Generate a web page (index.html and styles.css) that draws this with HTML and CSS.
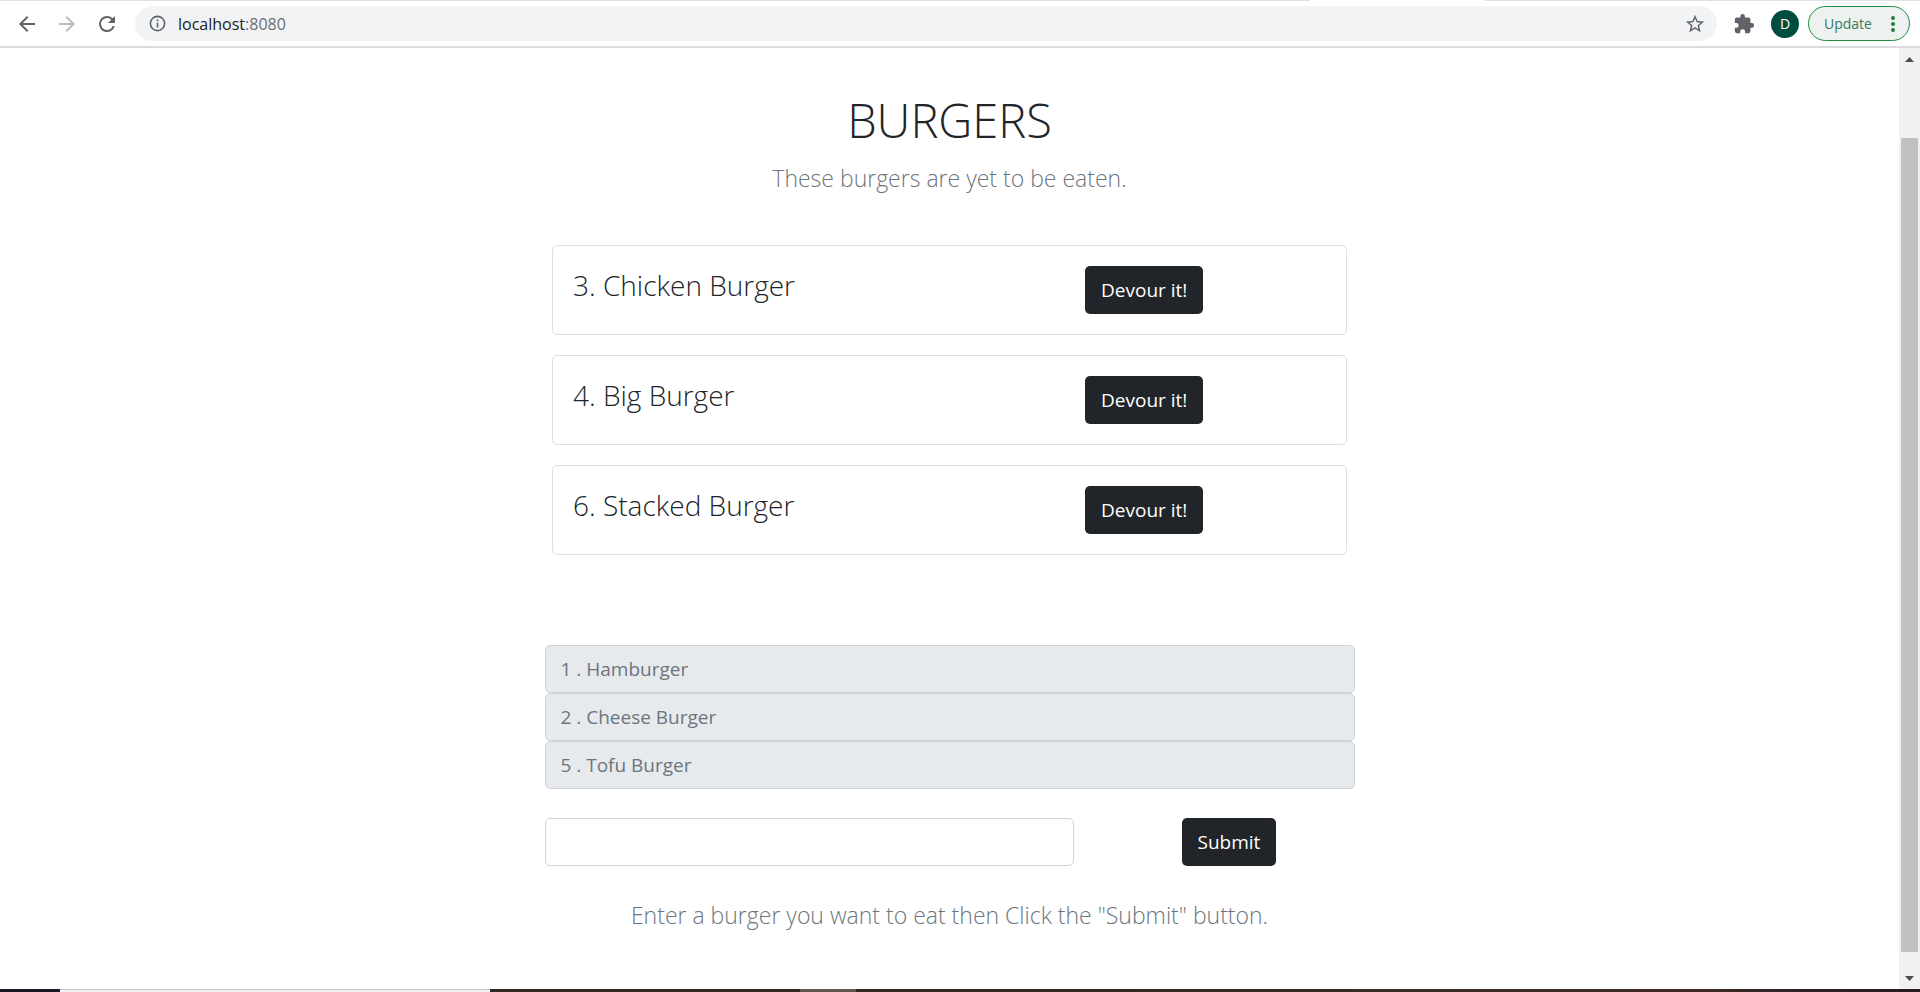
FILE: index.html
```html
<!DOCTYPE html>
<html lang="en">
<head>
<meta charset="utf-8">
<title>Burgers</title>
<link rel="stylesheet" href="styles.css">
</head>
<body>
<div class="window">
  <header class="toolbar">
    <span class="active-tab"></span>
    <nav class="nav">
      <button class="icon-btn" type="button" aria-label="Back"><svg viewBox="0 0 24 24"><path d="M20 11H7.83l5.59-5.59L12 4l-8 8 8 8 1.41-1.41L7.83 13H20z"/></svg></button>
      <button class="icon-btn muted" type="button" aria-label="Forward"><svg viewBox="0 0 24 24"><path d="M12 4l-1.41 1.41L16.17 11H4v2h12.17l-5.58 5.59L12 20l8-8z"/></svg></button>
      <button class="icon-btn" type="button" aria-label="Reload"><svg viewBox="0 0 24 24"><path d="M17.65 6.35A7.96 7.96 0 0 0 12 4a8 8 0 1 0 7.73 10h-2.08A6 6 0 1 1 12 6c1.66 0 3.14.69 4.22 1.78L13 11h7V4z"/></svg></button>
    </nav>
    <div class="omnibox">
      <svg class="info" viewBox="0 0 24 24"><path d="M11 7h2v2h-2zm0 4h2v6h-2zm1-9a10 10 0 1 0 0 20 10 10 0 0 0 0-20zm0 18a8 8 0 1 1 0-16 8 8 0 0 1 0 16z"/></svg>
      <a class="url" href="#">localhost<span class="port">:8080</span></a>
      <button class="icon-btn small" type="button" aria-label="Bookmark"><svg viewBox="0 0 24 24"><path d="M22 9.24l-7.19-.62L12 2 9.19 8.63 2 9.24l5.46 4.73L5.82 21 12 17.27 18.18 21l-1.63-7.03zM12 15.4l-3.76 2.27 1-4.28-3.32-2.88 4.38-.38L12 6.1l1.71 4.04 4.38.38-3.32 2.88 1 4.28z"/></svg></button>
    </div>
    <button class="icon-btn small" type="button" aria-label="Extensions"><svg viewBox="0 0 24 24"><path d="M20.5 11H19V7a2 2 0 0 0-2-2h-4V3.500a2.500 2.500 0 0 0-5 0V5H4a2 2 0 0 0-2 2v3.800h1.500a2.700 2.700 0 0 1 0 5.400H2V20a2 2 0 0 0 2 2h3.800v-1.500a2.700 2.700 0 0 1 5.400 0V22H17a2 2 0 0 0 2-2v-4h1.500a2.500 2.500 0 0 0 0-5z"/></svg></button>
    <button class="avatar" type="button">D</button>
    <button class="update" type="button">Update
      <svg class="dots" viewBox="0 0 4 18"><circle cx="2" cy="3" r="2"/><circle cx="2" cy="9" r="2"/><circle cx="2" cy="15" r="2"/></svg>
    </button>
  </header>

  <div class="viewport">
    <main class="page">
      <h1 class="title">BURGERS</h1>
      <p class="lead">These burgers are yet to be eaten.</p>

      <ul class="cards">
        <li class="card"><h2 class="card-name">3. Chicken Burger</h2><button class="btn" type="button">Devour it!</button></li>
        <li class="card"><h2 class="card-name">4. Big Burger</h2><button class="btn" type="button">Devour it!</button></li>
        <li class="card"><h2 class="card-name">6. Stacked Burger</h2><button class="btn" type="button">Devour it!</button></li>
      </ul>

      <div class="eaten">
        <input class="field" type="text" aria-label="Eaten burger 1" value="1 . Hamburger" disabled>
        <input class="field" type="text" aria-label="Eaten burger 2" value="2 . Cheese Burger" disabled>
        <input class="field" type="text" aria-label="Eaten burger 5" value="5 . Tofu Burger" disabled>
      </div>

      <form class="entry">
        <input class="field" id="burger" type="text">
        <button class="btn" type="submit">Submit</button>
      </form>
      <label class="lead" for="burger">Enter a burger you want to eat then Click the "Submit" button.</label>
    </main>
    <aside class="scrollbar">
      <button class="scroll-btn" type="button" aria-label="Scroll up"><svg viewBox="0 0 9 5"><path d="M0 5L4.500 0L9 5z"/></svg></button>
      <div class="track"><div class="thumb"></div></div>
      <button class="scroll-btn" type="button" aria-label="Scroll down"><svg viewBox="0 0 9 5"><path d="M0 0L4.500 5L9 0z"/></svg></button>
    </aside>
  </div>
  <footer class="taskbar"><span class="task-start"></span><span class="task-search"></span><span class="task-gap"></span><span class="task-active"></span><span class="task-rest"></span></footer>
</div>
</body>
</html>
```
FILE: styles.css
```css
* { box-sizing: border-box; }
body {
  margin: 0;
  background: #fff;
  color: #212529;
  font-family: "Open Sans", "Noto Sans", sans-serif;
  font-size: 19px;
}
button, input { font: inherit; }
button { padding: 0; border: 0; background: none; }
svg { display: block; fill: currentColor; }

.window { display: flex; flex-direction: column; min-height: 100vh; }

.toolbar {
  position: relative;
  display: flex;
  align-items: center;
  height: 48px;
  padding: 0 10px 0 15px;
  border-top: 1px solid #dee1e6;
  border-bottom: 2px solid #dadbde;
  color: #5f6368;
  gap: 16px;
}
.active-tab {
  position: absolute;
  top: -1px;
  left: 1310px;
  width: 175px;
  height: 1px;
  background: #fff;
}
.nav { display: flex; gap: 16px; }
.icon-btn { width: 24px; height: 24px; color: #5f6368; }
.icon-btn.small { width: 22px; height: 22px; }
.icon-btn.muted { color: #babcbe; }
.omnibox {
  flex: 1;
  display: flex;
  align-items: center;
  height: 35px;
  padding: 0 11px 0 13px;
  border-radius: 18px;
  background: #f1f3f4;
}
.info { width: 19px; height: 19px; }
.url {
  flex: 1;
  margin-left: 11px;
  color: #202124;
  font-size: 16px;
  line-height: 24px;
  text-decoration: none;
}
.port { color: #6b6f74; }
.avatar {
  width: 28px;
  height: 28px;
  border-radius: 50%;
  background: #004d40;
  color: #fff;
  font-size: 14px;
}
.update {
  display: flex;
  align-items: center;
  justify-content: space-between;
  width: 102px;
  height: 35px;
  margin-left: -7px;
  padding: 0 14px 0 15px;
  border: 1px solid #1e8e3e;
  border-radius: 18px;
  background: #edf2f0;
  color: #3a7a5c;
  font-size: 14px;
}
.dots { width: 4px; height: 18px; fill: #188038; }

.viewport { flex: 1; display: flex; }
.page {
  flex: 1;
  display: flex;
  flex-direction: column;
  align-items: center;
  padding: 42px 20px 0;
}
.title { margin: 0 0 10px; font-size: 47px; font-weight: 300; line-height: 60px; }
.lead { margin: 0; color: #6c757d; font-size: 23px; font-weight: 300; line-height: 36px; }

.cards {
  display: flex;
  flex-direction: column;
  gap: 20px;
  width: 100%;
  max-width: 795px;
  margin: 49px 0 90px;
  padding: 0;
  list-style: none;
}
.card {
  display: grid;
  grid-template-columns: 68% auto;
  justify-content: start;
  padding: 20px;
  border: 1px solid #dfdfdf;
  border-radius: 5px;
}
.card-name { margin: 0; font-size: 28px; font-weight: 300; line-height: 38px; }
.btn {
  height: 48px;
  padding: 0 16px;
  border-radius: 5px;
  background: #212529;
  color: #fff;
  line-height: 30px;
}

.eaten { width: 100%; max-width: 810px; margin-bottom: 29px; }
.field {
  display: block;
  width: 100%;
  height: 48px;
  padding: 0 15px;
  border: 1px solid #ced4da;
  border-radius: 5px;
  background: #fff;
  color: #6c757d;
}
.field:disabled { background: #e7eaed; }
.entry {
  display: grid;
  grid-template-columns: 529px auto;
  gap: 108px;
  justify-content: start;
  width: 100%;
  max-width: 810px;
  margin-bottom: 31px;
}

.scrollbar {
  display: flex;
  flex-direction: column;
  width: 21px;
  padding: 0 2px;
  background: #f1f1f1;
}
.scroll-btn { display: flex; align-items: center; justify-content: center; height: 22px; color: #4d4d4d; }
.scroll-btn svg { width: 9px; height: 5px; }
.track { flex: 1; padding: 68px 0 15px; display: flex; }
.thumb { flex: 1; background: #c1c1c1; }

.taskbar { display: flex; height: 3px; background: #35291f; }
.task-start { width: 60px; background: #1d1724; }
.task-search { width: 430px; border-top: 1px solid #c5c3c5; background: #f1f1f1; }
.task-gap { width: 310px; }
.task-active { width: 56px; background: #5f564f; }
.task-rest { flex: 1; margin-left: 4px; background: linear-gradient(90deg, #35291f, #3c2927 80%, #231b20); }
```
